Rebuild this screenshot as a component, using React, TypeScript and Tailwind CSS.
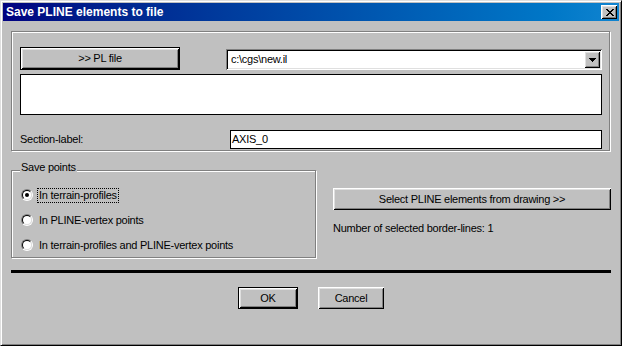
import React from "react";

const raised =
  "bg-[#c0c0c0] shadow-[inset_1px_1px_#fff,inset_-1px_-1px_#000,inset_2px_2px_#dfdfdf,inset_-2px_-2px_#808080]";
const sunken =
  "bg-white shadow-[inset_1px_1px_#808080,inset_-1px_-1px_#fff,inset_2px_2px_#000,inset_-2px_-2px_#dfdfdf]";
const etched = "border border-[#808080] shadow-[inset_1px_1px_#fff,1px_1px_#fff]";

function CloseGlyph() {
  // classic 8x7 bitmap cross
  const rows = ["XX....XX", ".XX..XX.", "..XXXX..", "...XX...", "..XXXX..", ".XX..XX.", "XX....XX"];
  return (
    <svg width="8" height="7" viewBox="0 0 8 7" shapeRendering="crispEdges">
      {rows.flatMap((r, y) =>
        r.split("").map((c, x) => (c === "X" ? <rect key={`${x}-${y}`} x={x} y={y} width="1" height="1" fill="#000" /> : null))
      )}
    </svg>
  );
}

function Radio({ label, checked, focused }: { label: string; checked?: boolean; focused?: boolean }) {
  return (
    <div className="flex h-[12px] items-center gap-[4px]">
      <div className="flex h-[12px] w-[12px] shrink-0 items-center justify-center rounded-full border border-t-[#808080] border-l-[#808080] border-r-white border-b-white">
        <div className="flex h-[10px] w-[10px] items-center justify-center rounded-full border border-t-black border-l-black border-r-[#dfdfdf] border-b-[#dfdfdf] bg-white">
          {checked && <div className="h-[4px] w-[4px] rounded-full bg-black" />}
        </div>
      </div>
      <span
        className={
          "whitespace-nowrap border border-dotted pl-[1px] pr-[1px] " + (focused ? "border-black" : "border-transparent")
        }
      >
        {label}
      </span>
    </div>
  );
}

export default function App() {
  return (
    <div className="flex h-[346px] w-[622px] flex-col border border-t-[#dfdfdf] border-l-[#dfdfdf] border-r-black border-b-black bg-[#c0c0c0] p-[2px] font-['Liberation_Sans',Arial,sans-serif] text-[11px] leading-[13px] tracking-[-0.25px] text-black shadow-[inset_1px_1px_#fff,inset_-1px_-1px_#808080]">
      {/* Title bar */}
      <div className="flex h-[18px] shrink-0 items-center justify-between bg-gradient-to-r from-[#000080] to-[#1084d0] pl-[3px] pr-[2px]">
        <span className="text-[12px] font-bold tracking-normal text-white">Save PLINE elements to file</span>
        <div className={"flex h-[14px] w-[16px] items-center justify-center pl-[1px] " + raised}>
          <CloseGlyph />
        </div>
      </div>

      {/* Body */}
      <div className="flex flex-1 flex-col px-[8px] pt-[10px]">
        {/* File group */}
        <div className={"flex h-[120px] w-[599px] flex-col pl-[8px] pr-[7px] pt-[15px] " + etched}>
          <div className="flex items-end justify-between">
            <button className="h-[23px] w-[160px] border border-black bg-[#c0c0c0] p-0">
              <div className={"flex h-full w-full items-center justify-center " + raised}>&gt;&gt; PL file</div>
            </button>
            <div className={"flex h-[21px] w-[376px] items-center p-[2px] " + sunken}>
              <span className="flex-1 pl-[3px]">{"c:\\cgs\\new.il"}</span>
              <div className={"flex h-[17px] w-[16px] items-center justify-center " + raised}>
                <svg width="7" height="4" viewBox="0 0 7 4" shapeRendering="crispEdges">
                  <rect x="0" y="0" width="7" height="1" fill="#000" />
                  <rect x="1" y="1" width="5" height="1" fill="#000" />
                  <rect x="2" y="2" width="3" height="1" fill="#000" />
                  <rect x="3" y="3" width="1" height="1" fill="#000" />
                </svg>
              </div>
            </div>
          </div>
          <div className="mt-[4px] h-[41px] w-[582px] border border-black bg-white" />
          <div className="mt-[15px] flex items-center justify-between">
            <span>Section-label:</span>
            <div className="flex h-[19px] w-[372px] items-center border border-black bg-white pl-[1px]">AXIS_0</div>
          </div>
        </div>

        {/* Save points + selection */}
        <div className="mt-[19px] flex">
          <div className={"relative h-[88px] w-[305px] " + etched}>
            <span className="absolute -top-[10px] left-[8px] bg-[#c0c0c0] px-[1px]">Save points</span>
            <div className="flex flex-col gap-[13px] pl-[9px] pt-[18px]">
              <Radio label="In terrain-profiles" checked focused />
              <Radio label="In PLINE-vertex points" />
              <Radio label="In terrain-profiles and PLINE-vertex points" />
            </div>
          </div>
          <div className="ml-[17px] flex w-[278px] flex-col pt-[18px]">
            <button className={"flex h-[22px] w-full items-center justify-center p-0 " + raised}>
              Select PLINE elements from drawing &gt;&gt;
            </button>
            <div className="mt-[12px]">Number of selected border-lines: 1</div>
          </div>
        </div>

        <div className="mt-[12px] h-[3px] w-full bg-black" />

        <div className="mt-[14px] flex justify-center gap-[20px]">
          <button className="h-[22px] w-[60px] border border-black bg-[#c0c0c0] p-0">
            <div className={"flex h-full w-full items-center justify-center " + raised}>OK</div>
          </button>
          <button className={"flex h-[22px] w-[66px] items-center justify-center p-0 " + raised}>Cancel</button>
        </div>
      </div>
    </div>
  );
}
